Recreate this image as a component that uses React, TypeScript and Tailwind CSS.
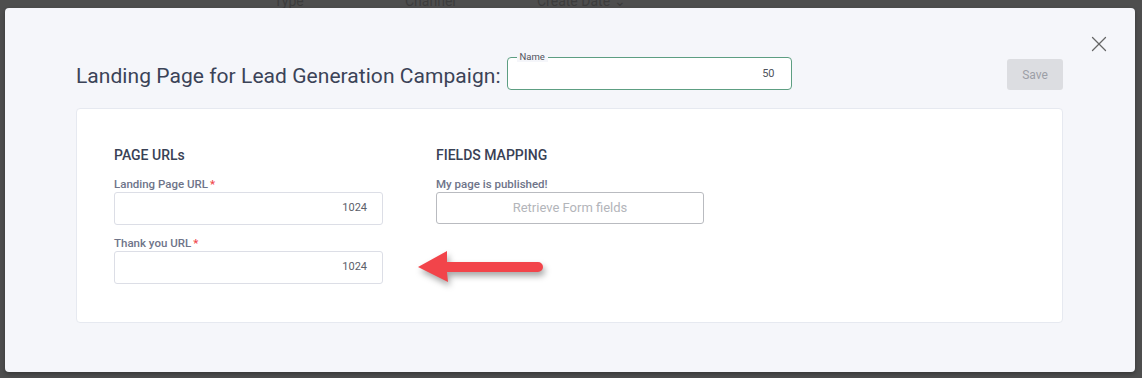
import { X } from "lucide-react";

const font = "font-['Roboto','Liberation_Sans',sans-serif]";

const UrlField = ({ label, value }: { label: string; value: string }) => (
  <div className="flex flex-col">
    <label className="text-[11.5px] leading-[14px] font-medium text-[#6e7489]">
      {label}
      <span className="text-[#f0474c] ml-[2px]">*</span>
    </label>
    <div className="mt-[1px] h-[33px] rounded-[3px] border border-[#dcdee6] bg-white flex items-center justify-end pr-[15px] text-[11px] text-[#5c6069]">
      {value}
    </div>
  </div>
);

const Arrow = () => (
  <svg
    width="150"
    height="50"
    viewBox="0 0 150 50"
    className="absolute left-[333px] top-[136px] drop-shadow-[2px_4px_3px_rgba(0,0,0,0.35)]"
  >
    <path
      d="M8 22 L37 6 L37 17 L128 17 A5 5 0 0 1 128 27 L37 27 L38 37 Z"
      fill="#f2444a"
    />
  </svg>
);

export default function App() {
  return (
    <div className={`${font} w-[1142px] h-[378px] bg-[#4e4e4e] overflow-hidden flex flex-col`}>
      {/* page behind the overlay */}
      <div className="h-[8px] overflow-hidden relative">
        <div className="flex text-[14px] text-[#3c3c3c] -mt-[9px] pl-[274px] gap-0">
          <span className="w-[131px]">Type</span>
          <span className="w-[132px]">Channel</span>
          <span>Create Date ⌄</span>
        </div>
      </div>

      <div className="ml-[5px] w-[1130px] h-[364px] bg-[#f5f6fa] rounded-[4px] relative shadow-[0_2px_4px_rgba(0,0,0,0.3)]">
        <button className="absolute right-[23px] top-[23px] text-[#666666]">
          <X size={26} strokeWidth={1.2} />
        </button>

        <div className="pl-[71px] pr-[72px] pt-[49px]">
          <div className="flex items-start h-[33px]">
            <h1 className="text-[21px] leading-[24px] text-[#3b4357] mt-[7px] mr-[6px] tracking-[0.05px]">
              Landing Page for Lead Generation Campaign:
            </h1>
            <div className="relative w-[285px] h-[33px] rounded-[4px] border border-[#5d9e82] bg-white flex items-center justify-end pr-[16px] text-[11px] text-[#4f535c]">
              <span className="absolute -top-[6px] left-[9px] px-[3px] bg-[#f5f6fa] leading-[10px] text-[9.5px] text-[#4f535c]">
                Name
              </span>
              <span className="mt-[1px]">50</span>
            </div>
            <button className="ml-auto mt-[2px] w-[56px] h-[31px] rounded-[3px] bg-[#dcdde1] text-[12px] text-[#9c9fa7]">
              Save
            </button>
          </div>

          <div className="relative mt-[18px] h-[215px] bg-white rounded-[4px] border border-[#e6e9f0] pl-[37px] pt-[36px]">
            <div className="flex gap-[53px]">
              <div className="w-[269px] flex flex-col">
                <h2 className="text-[14px] leading-[20px] font-medium text-[#394155]">PAGE URLs</h2>
                <div className="mt-[12px] flex flex-col gap-[11px]">
                  <UrlField label="Landing Page URL" value="1024" />
                  <UrlField label="Thank you URL" value="1024" />
                </div>
              </div>
              <div className="w-[268px] flex flex-col">
                <h2 className="text-[14px] leading-[20px] font-medium text-[#394155]">FIELDS MAPPING</h2>
                <span className="mt-[12px] text-[11.5px] leading-[14px] font-medium text-[#6e7489]">
                  My page is published!
                </span>
                <button className="mt-[1px] h-[32px] rounded-[3px] border border-[#b9bbc0] bg-white text-[13px] text-[#b3b5ba]">
                  Retrieve Form fields
                </button>
              </div>
            </div>
            <Arrow />
          </div>
        </div>
      </div>
    </div>
  );
}
